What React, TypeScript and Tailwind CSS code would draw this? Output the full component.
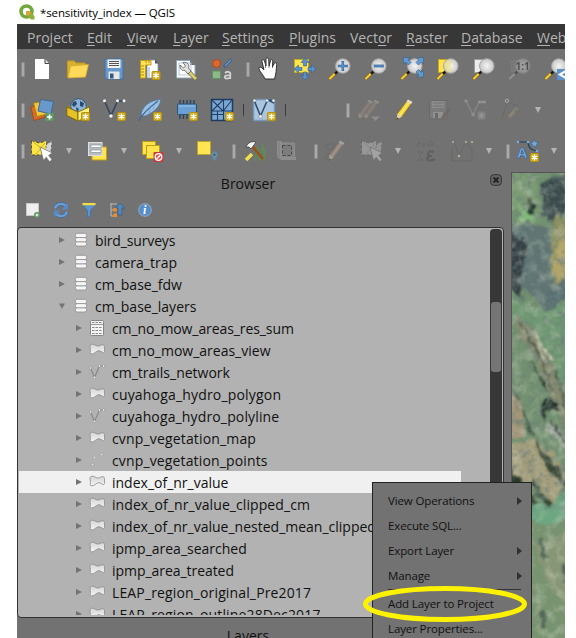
import type { ReactNode } from "react";

const UI = "font-['Open_Sans','Noto_Sans',sans-serif]";

function Icon({ ml = "ml-3", dim = "", children }: { ml?: string; dim?: string; children: ReactNode }) {
  return (
    <svg viewBox="0 0 24 24" className={`h-6 w-6 shrink-0 ${ml} ${dim}`}>
      {children}
    </svg>
  );
}

const Handle = ({ ml }: { ml: string }) => (
  <div className={`h-[15px] w-1 shrink-0 rounded-[1px] border border-[#8a8a8a] bg-[#a9a9a9] ${ml}`} />
);
const Divider = ({ ml }: { ml: string }) => <div className={`h-3 w-px shrink-0 bg-[#3c3c3c] ${ml}`} />;
const Arrow = ({ ml }: { ml: string }) => (
  <svg viewBox="0 0 6 6" className={`h-1.5 w-1.5 shrink-0 ${ml}`}>
    <path d="M0 0H6L3 6Z" fill="#b4b4b4" />
  </svg>
);

/* Small yellow "new" badge in an icon's lower right corner */
const Star = ({ x = 15, y = 14 }: { x?: number; y?: number }) => (
  <g transform={`translate(${x} ${y})`}>
    <rect x=".5" y=".5" width="8" height="8" rx="1" fill="#d3ad22" stroke="#b8930c" />
    <path d="M4.500 1.500V7.500M1.800 3L7.200 6M7.200 3L1.800 6" stroke="#fff" strokeWidth="1.300" />
  </g>
);

const Lens = ({ back }: { back?: ReactNode }) => (
  <>
    {back}
    <path d="M1.500 22L7.500 16" stroke="#8b6a16" strokeWidth="3.200" />
    <path d="M1.500 22L7 16.500" stroke="#f7cf3a" strokeWidth="2" />
    <path d="M7 16.800L9.500 14.300" stroke="#1d1d1d" strokeWidth="2.600" />
    <circle cx="14.800" cy="9" r="7.300" fill="url(#lens)" stroke="#a4a4a4" strokeWidth="1" />
  </>
);

const Pencil = ({ color }: { color: string }) => (
  <>
    <path d="M16 1.500L20.500 4L10 18.500L4.500 22L5.500 15.500Z" fill={color} stroke="#75672c" strokeWidth=".6" />
    <path d="M18 3L7.500 17.500" stroke="#fff" strokeOpacity=".45" strokeWidth="1.200" />
    <path d="M16 1.500L20.500 4L19 6L14.600 3.500Z" fill="#ddd" />
    <path d="M5.500 15.500L10 18.500L4.500 22Z" fill="#ddd1b3" />
    <path d="M5 19.500L7 20.500L4.200 22.300Z" fill="#333" />
  </>
);

const Cursor = () => (
  <path d="M10 8L13.500 21.500L16.200 18.200L19.500 22.700L22 20.800L18.700 16.300L22.500 14Z" fill="#fff" stroke="#666" strokeWidth=".7" />
);

const SelectArt = () => (
  <>
    <path d="M1.500 1.500L9 4L16 2V15.500L1.500 16Z" fill="#fbe447" />
    <path d="M1.500 1.500L9 4L16 2M1.500 1.500V16H9" fill="none" stroke="#5e5520" strokeDasharray="3 2" />
    <path d="M16 6L22 1.500L21 13L18 14L16 12Z" fill="#d5d5d5" stroke="#555" strokeWidth=".8" strokeDasharray="2 2" />
    <path d="M2 2L11 9M15 4L6 15" stroke="#c5b22a" />
    <Cursor />
  </>
);

function FileRow() {
  return (
    <div className="flex h-6 items-center">
      <Handle ml="ml-1" />
      <Icon ml="ml-[5px]">
        <path d="M5 2H15L19 6.500V22H5Z" fill="#fff" />
        <path d="M15 2V6.500H19" fill="#ddd" stroke="#444" strokeWidth="1" />
      </Icon>
      <Icon>
        <path d="M1.500 4H8L10 6H19V20H1.500Z" fill="#d9b02e" stroke="#c49a1d" />
        <path d="M4.500 9L22.500 7.500L19.500 20L2 21Z" fill="#ffd95a" stroke="#d3aa2c" strokeWidth=".8" />
      </Icon>
      <Icon>
        <path d="M3 2H21V22H4.500L3 20.500Z" fill="#6698cb" stroke="#44719f" />
        <rect x="5.500" y="2.500" width="13" height="8.500" fill="#f1f1f1" />
        <path d="M7 4.500H17M7 6.500H17M7 8.500H17" stroke="#555" />
        <rect x="6.500" y="14.500" width="11" height="7.500" fill="#e6e6e6" />
        <rect x="8" y="16.500" width="3.500" height="5" fill="#35597e" />
      </Icon>
      <Icon>
        <path d="M9 3H17L20 6V21H9Z" fill="#fff" stroke="#7c96b8" strokeWidth=".8" />
        <path d="M17 2.500V6.500H21Z" fill="#555" />
        <path d="M2.500 3.500H13V8H7.500V21H2.500Z" fill="#fbe25c" stroke="#c89c09" />
        <path d="M3 9H6M3 12H6M3 15H6M3 18H6M8 4V6M11 4V6" stroke="#b88d06" />
        <path d="M11 10V20" stroke="#94add0" />
        <Star x={13.5} y={14} />
      </Icon>
      <Icon>
        <path d="M2.500 3.500H16L21 8V21H2.500Z" fill="#fff" stroke="#8ea3bd" />
        <path d="M16 3V8H21Z" fill="#666" />
        <rect x="5" y="6" width="12" height="12" fill="none" stroke="#b3c6e2" />
        <path d="M14 14L22 22" stroke="#776a33" strokeWidth="4.500" />
        <path d="M14 14L22 22" stroke="#d7cb74" strokeWidth="3" />
        <path d="M9 5.500C13 4.500 16 8 14.500 11L17 14L14 17L11 13.500C7 14 5.500 11 6 8L9.500 11L11.500 9Z" fill="#dfdfdf" stroke="#555" strokeWidth=".8" />
      </Icon>
      <Icon>
        <circle cx="6.500" cy="6.500" r="4" fill="#d96831" stroke="#af481b" />
        <path d="M14 10L21.500 2.500" stroke="#395f89" strokeWidth="3" />
        <path d="M15 9L21 3" stroke="#6b9acb" strokeWidth="1.200" />
        <rect x="2.500" y="14" width="8" height="7.500" fill="#8bb988" stroke="#5f925f" />
        <path d="M15 16Q18 13.500 20.300 16V22M20 18.300Q14.500 18 14.700 20.300Q15.500 23 20 20.500" fill="none" stroke="#d3d3d3" strokeWidth="1.700" />
      </Icon>
      <Handle ml="ml-3" />
      <Icon ml="ml-1.5">
        <path d="M9 22C7.500 18 4 15 3 12C2.500 10 4.500 9.500 6 11L8 13L6 4.500C5.500 2.500 8 2 8.500 4L10 9V2.500C10 .5 12.500 .5 12.700 2.500L13.200 9L14.500 3.500C15 2 17 2.500 16.800 4L16.400 10L18.300 6.500C19.200 5 21 6 20.700 7.500C20 13 20.500 16 18.500 22Z" fill="#fff" stroke="#222" strokeWidth=".9" />
        <path d="M9.500 5V11M13 5V11M16.500 5V11" stroke="#444" strokeWidth=".7" />
      </Icon>
      <Icon>
        <rect x="2.500" y="2.500" width="14" height="13" fill="#fde650" stroke="#c8a91a" />
        <path d="M13 1L17 5.500H14.500V9H11.500V5.500H9ZM24 12L19.500 16V13.500H16V10.500H19.500V8ZM13 23L9 18.500H11.500V15H14.500V18.500H17ZM2 12L6.500 8V10.500H10V13.500H6.500V16Z" fill="#5a90cb" stroke="#366596" strokeWidth=".6" />
      </Icon>
      <Icon>
        <Lens />
        <path d="M14.800 4V14M9.800 9H19.800" stroke="#3566a0" strokeWidth="2.600" />
        <path d="M14.800 4.500V13.500M10.300 9H19.300" stroke="#6496cb" strokeWidth="1.200" />
      </Icon>
      <Icon>
        <Lens />
        <path d="M9.800 9H19.800" stroke="#3566a0" strokeWidth="2.800" />
        <path d="M10.300 9H19.300" stroke="#6496cb" strokeWidth="1.200" />
      </Icon>
      <Icon>
        <Lens />
        <path d="M3.500 .5H10L8 2.500L11 5.500L8.500 8L5.500 5L3.500 7ZM23.500 .5V7L21.500 5L18.500 8L16 5.500L19 2.500L17 .5ZM23.500 20H17L19 18L16 15L18.500 12.500L21.500 15.500L23.500 13.500Z" fill="#639bd1" stroke="#396590" strokeWidth=".7" />
      </Icon>
      <Icon>
        <Lens back={<rect x="2.500" y="2.500" width="14" height="13" fill="#ffe34c" stroke="#c5a718" />} />
        <path d="M8 7Q11 2 15 3V15Q9 15 8 9" fill="#efe483" opacity=".65" />
      </Icon>
      <Icon>
        <Lens back={<rect x="2.500" y="2.500" width="14" height="13" fill="#ebebeb" stroke="#9b9b9b" />} />
      </Icon>
      <Icon dim="opacity-35 grayscale">
        <Lens back={<rect x="2.500" y="2.500" width="14" height="13" fill="#888" stroke="#777" />} />
        <text x="7.500" y="12.500" fontSize="10" fontWeight="700" fontFamily="Open Sans" fill="#111">1:1</text>
      </Icon>
      <Icon>
        <Lens />
        <rect x="13" y="12" width="11" height="11" fill="#5c91c9" />
        <path d="M22 14L16 17.500L22 21" fill="none" stroke="#fff" strokeWidth="2.200" />
      </Icon>
    </div>
  );
}

function LayerRow() {
  return (
    <div className="flex h-6 items-center">
      <Handle ml="ml-1" />
      <Icon ml="ml-[5px]">
        <path d="M.8 9L12 6L15 19L4 22.500Z" fill="#d86b2c" stroke="#ad4818" />
        <path d="M3.500 5L14 3.500L18 16L7 18.500Z" fill="#f2c540" stroke="#a9800e" />
        <path d="M10.500 1.500L23.500 3.500L21 16L8 13Z" fill="#6899ca" stroke="#406992" />
        <rect x="15.500" y="15" width="8" height="8" rx="1" fill="#5d9d61" />
        <path d="M19.500 16.500V21.500M17 19H22" stroke="#fff" strokeWidth="1.600" />
      </Icon>
      <Icon>
        <path d="M.8 9L12 4L23 9L12 14Z" fill="#a88a13" />
        <circle cx="12.500" cy="8.500" r="7.800" fill="#8db3d8" stroke="#355779" />
        <path d="M7 4L10 3L11 6L8 9L6 7ZM14 3L18 5L17 9L14 8ZM10 9L13 11L11 15Z" fill="#2a4b6d" />
        <path d="M.8 9L12 14V23L.8 17.500Z" fill="#e4c229" stroke="#7e6505" />
        <path d="M12 14L23.500 9V18L12 23Z" fill="#fff27f" stroke="#8d720a" />
        <Star />
      </Icon>
      <Icon>
        <path d="M2.500 3L9 17.500L15.500 3H22" fill="none" stroke="#33475d" strokeWidth="1.600" />
        <g fill="#f3f3f3"><circle cx="2.500" cy="2.800" r="1.500" /><circle cx="9" cy="18" r="1.700" /><circle cx="15.500" cy="2.800" r="1.500" /><circle cx="22" cy="2.800" r="1.500" /></g>
        <Star />
      </Icon>
      <Icon>
        <path d="M3 18C3 9 12 2 22.500 1.500C23 6 18 14 7 18Z" fill="#9cc1e6" stroke="#4c79a6" strokeWidth=".8" />
        <path d="M.5 23C4 16 12 9 20 3" fill="none" stroke="#42698f" strokeWidth="1.300" />
        <path d="M8 11L8.500 14M12 7.500L12.500 11M11 15L12 12M15 11.500L16 8.500" stroke="#6d9bc8" strokeWidth=".8" />
        <Star />
      </Icon>
      <Icon>
        <path d="M6 2V21M9.500 2V21M13 2V21M16.500 2V21M20 2V18" stroke="#253f5c" strokeWidth="1.300" />
        <rect x="3.500" y="6" width="19" height="10.500" rx="1" fill="#6ba0d4" stroke="#2d527a" />
        <path d="M5 8H21" stroke="#9bc3e8" />
        <Star />
      </Icon>
      <Icon>
        <path d="M1.500 1.500H22.500V22.500H1.500Z" fill="#7aa6d4" stroke="#1f3c5f" strokeWidth="1.500" />
        <path d="M13.500 1.500V22.500M1.500 13H22.500M1.500 16.500H13M7.500 13V22M2 2L13 13M13 2L2 13M22 2L14 12" stroke="#203f62" strokeWidth="1.100" />
        <Star />
      </Icon>
      <Divider ml="ml-[9px]" />
      <Icon ml="ml-2">
        <rect x="1.500" y="1.500" width="21" height="21" rx="1" fill="#adc6e0" stroke="#7694b5" strokeWidth="1.500" />
        <path d="M2 2L8.500 18L15.500 2H22M16 2L22 5" fill="none" stroke="#325170" strokeWidth="1.600" />
        <g fill="#fff" stroke="#4c6680" strokeWidth=".5"><circle cx="2.500" cy="2.500" r="1.500" /><circle cx="8.500" cy="18.500" r="1.800" /><circle cx="15" cy="2.500" r="1.500" /><circle cx="21.500" cy="2.500" r="1.500" /></g>
        <Star />
      </Icon>
      <Divider ml="ml-[9px]" />
      <Handle ml="ml-[60px]" />
      <Icon ml="ml-1.5">
        <g opacity=".25"><g transform="translate(-3 0)"><Pencil color="#ad8d80" /></g><g transform="translate(3 0)"><Pencil color="#ad8d80" /></g></g>
        <path d="M15 18.500H24L19.500 23Z" fill="#8d8d8d" />
      </Icon>
      <Icon><Pencil color="#f7d72f" /></Icon>
      <Icon dim="opacity-25">
        <path d="M1.500 2.500H19V21H1.500Z" fill="#999" stroke="#555" />
        <path d="M4 3H16V10H4Z" fill="#ddd" /><path d="M5 5H15M5 8H15" stroke="#777" />
        <rect x="5" y="14" width="10" height="6" fill="#eee" /><rect x="7" y="15" width="3" height="5" fill="#555" />
        <path d="M22 10L14 21" stroke="#795346" strokeWidth="3" />
      </Icon>
      <Icon dim="opacity-25 grayscale">
        <path d="M2 3L9 17L15 4H21" fill="none" stroke="#bbb" strokeWidth="1.500" />
        <path d="M.5 3H3.500M7.500 17H10.500M14 4H22" stroke="#eee" strokeWidth="2.500" /><Star x={13} y={13} />
      </Icon>
      <Icon dim="opacity-40">
        <path d="M2 21L7 4L19 8" fill="none" stroke="#555" strokeWidth=".8" />
        <circle cx="7" cy="2.800" r="1.700" fill="#777" stroke="#fff" />
        <path d="M9 19L17 10" stroke="#aaa08c" strokeWidth="3" /><path d="M15 12L21 19" stroke="#887052" strokeWidth="2" />
        <path d="M2 21L9 14" stroke="#887052" strokeWidth="1.500" />
      </Icon>
      <Arrow ml="ml-[11px]" />
    </div>
  );
}

function SelectRow() {
  return (
    <div className="flex h-6 items-center">
      <Handle ml="ml-1" />
      <Icon ml="ml-[5px]"><SelectArt /></Icon>
      <Arrow ml="ml-3" />
      <Icon ml="ml-[13px]">
        <rect x="7" y="8" width="14.500" height="13" fill="#ffe54c" stroke="#be9e16" />
        <rect x="3.500" y="3.500" width="13.500" height="13" fill="#b7bdc3" stroke="#dce0e3" />
        <rect x="6" y="6" width="10" height="2.500" fill="#fff" stroke="#7c848e" strokeWidth=".6" /><rect x="6" y="11" width="10" height="2.500" fill="#fff" stroke="#7c848e" strokeWidth=".6" />
      </Icon>
      <Arrow ml="ml-3" />
      <Icon ml="ml-[13px]">
        <rect x="2.500" y="2.500" width="13" height="13" fill="#ffe34a" stroke="#bd9e18" />
        <rect x="6.500" y="6.500" width="13" height="13" fill="#ffe34a" stroke="#bd9e18" />
        <rect x="13.500" y="13" width="10" height="10" rx="1" fill="#c93c3c" />
        <circle cx="18.500" cy="18" r="3.300" fill="#e65252" stroke="#fff" strokeWidth="1.300" /><path d="M16.500 20L20.500 16" stroke="#fff" strokeWidth="1.300" />
      </Icon>
      <Arrow ml="ml-3" />
      <Icon ml="ml-[13px]">
        <rect x="2.500" y="2.500" width="13" height="13" fill="#ffe552" stroke="#c2a329" />
        <path d="M19.500 22L16.800 17A3 3 0 1 1 22.200 17Z" fill="#718da0" stroke="#4f8bb0" /><circle cx="19.500" cy="15.700" r="1" fill="#444" />
      </Icon>
      <Handle ml="ml-[13px]" />
      <Icon ml="ml-[7px]">
        <path d="M12 21L15 7L16 22L20 5L21 22L22 10M11 22L14 15M17 21L22 15" fill="none" stroke="#5d8e53" strokeWidth="1.500" opacity=".8" />
        <path d="M9 7L20 20" stroke="#9c5212" strokeWidth="2.500" />
        <path d="M3 8C5 3 9 2 13 3L11 6L8 10L6 8Z" fill="#f1f1f1" stroke="#333" strokeWidth=".7" />
        <path d="M3 21L9 15" stroke="#eee14b" strokeWidth="3.500" />
      </Icon>
      <Icon ml="ml-2" dim="opacity-50">
        <path d="M2.500 2.500H6V4H19.500V19.500H4L2.500 17Z" fill="#999" stroke="#aaa" /><rect x="7.500" y="6.500" width="9" height="10" fill="#888" stroke="#222" strokeDasharray="3 2" />
        <path d="M3 18H21V21H6Z" fill="#aaa" /><path d="M6 3V18" stroke="#bbb" />
      </Icon>
      <Handle ml="ml-[15px]" />
      <Icon ml="ml-1.5">
        <path d="M2 5H10V10H2ZM2 15H9V20H2Z" fill="none" stroke="#6a6a6a" />
        <g opacity=".45"><Pencil color="#bf9b8d" /></g>
      </Icon>
      <Icon dim="opacity-35 grayscale"><SelectArt /></Icon>
      <Arrow ml="ml-[11px]" />
      <Icon ml="ml-[13px]">
        <g fill="none" stroke="#676767" strokeWidth=".9"><path d="M3 8L5 3L10 8V3M13 6L17 2L20 6ZM3 13H9L5 17L9 21H3" /><path d="M20 13Q14 11 14 15Q14 17 18 17Q13 17 13 20Q15 23 21 20" stroke="#606060" strokeWidth="2" /></g>
      </Icon>
      <Icon>
        <path d="M2 9V22H22V9M4 2L9 17L16 2L22 10" fill="none" stroke="#6a6966" /><g fill="#bcb798"><circle cx="3" cy="3" r="1" /><circle cx="9" cy="17" r="1.200" /><circle cx="16" cy="3" r="1" /><circle cx="22" cy="3" r="1" /></g>
      </Icon>
      <Arrow ml="ml-3" />
      <Handle ml="ml-[14px]" />
      <Icon ml="ml-1.5">
        <path d="M2 3H12Q12 11 21 12" fill="none" stroke="#203f61" strokeWidth="1.200" />
        <g fill="#78aadd"><circle cx="2" cy="3" r="1.300" /><circle cx="12" cy="3" r="1.300" /><circle cx="21" cy="12" r="1.300" /></g>
        <path d="M18.500 .5L19.700 3.200L22.600 3.500L20.400 5.400L21 8.200L18.500 6.800L16 8.200L16.600 5.400L14.400 3.500L17.300 3.200Z" fill="#74a9e0" stroke="#345e88" strokeWidth=".5" />
        <text x="1" y="18.500" fontSize="15" fontWeight="700" fontFamily="Open Sans" fill="#7bb0e6" stroke="#34618f" strokeWidth=".7">A</text>
        <Star x={14} y={14} />
      </Icon>
      <Arrow ml="ml-[11px]" />
    </div>
  );
}

type Kind = "db" | "table" | "poly" | "line" | "points";

function TreeIcon({ kind }: { kind: Kind }) {
  return (
    <svg viewBox="0 0 16 16" className="h-4 w-4 shrink-0">
      {kind === "db" && (
        <g fill="#f5f5f5" stroke="#8d8d8d" strokeWidth=".8">
          <rect x="2.300" y="9.700" width="11.400" height="4.300" rx="2" />
          <rect x="2.300" y="5.500" width="11.400" height="4.300" rx="2" />
          <rect x="2.300" y="1.300" width="11.400" height="4.300" rx="2" />
        </g>
      )}
      {kind === "table" && (
        <>
          <rect x="1.500" y=".5" width="13" height="15" rx="1" fill="#f4f4f4" stroke="#858585" />
          <path d="M2 4.500H14" stroke="#999" />
          <path d="M3 2.500H13M3 7.500H13M3 10.500H13M3 13.500H13" stroke="#888" strokeDasharray="2.500 1" />
        </>
      )}
      {kind === "poly" && (
        <path d="M1 5Q.5 2.500 3 2Q5.500 2.500 8 4Q11 4.300 13 2.500Q15.500 2.500 15.500 4.500V9.500Q15 11.500 13 10Q10 7.500 7.500 9.500Q5 12 2 12Q.5 11.500 1.500 8.500Z" fill="url(#poly)" stroke="#8d8d8d" strokeWidth=".8" />
      )}
      {kind === "line" && (
        <>
          <path d="M1.500 4L5.500 13.500L10.500 2H14.500" fill="none" stroke="#888" strokeWidth="1.200" />
          <g fill="#f3f3f3" stroke="#888" strokeWidth=".6"><circle cx="1.500" cy="4" r="1.200" /><circle cx="5.500" cy="13.500" r="1.200" /><circle cx="10.500" cy="2" r="1.200" /><circle cx="14.500" cy="2" r="1.200" /></g>
        </>
      )}
      {kind === "points" && (
        <g fill="#eee" stroke="#8a8a8a" strokeWidth=".6"><circle cx="5.500" cy="5.500" r="1.200" /><circle cx="3.500" cy="12.500" r="1.200" /><circle cx="12.500" cy="2.500" r="1.200" /></g>
      )}
    </svg>
  );
}

const rows: { kind: Kind; name: string; open?: boolean; selected?: boolean; track?: string }[] = [
  { kind: "db", name: "bird_surveys", track: "tracking-[-0.15px]" },
  { kind: "db", name: "camera_trap" },
  { kind: "db", name: "cm_base_fdw" },
  { kind: "db", name: "cm_base_layers", open: true },
  { kind: "table", name: "cm_no_mow_areas_res_sum", track: "tracking-[-0.09px]" },
  { kind: "poly", name: "cm_no_mow_areas_view" },
  { kind: "line", name: "cm_trails_network" },
  { kind: "poly", name: "cuyahoga_hydro_polygon", track: "tracking-[0.18px]" },
  { kind: "line", name: "cuyahoga_hydro_polyline", track: "tracking-[0.14px]" },
  { kind: "poly", name: "cvnp_vegetation_map", track: "tracking-[0.16px]" },
  { kind: "points", name: "cvnp_vegetation_points", track: "tracking-[0.14px]" },
  { kind: "poly", name: "index_of_nr_value", selected: true },
  { kind: "poly", name: "index_of_nr_value_clipped_cm", track: "tracking-[0.08px]" },
  { kind: "poly", name: "index_of_nr_value_nested_mean_clipped" },
  { kind: "poly", name: "ipmp_area_searched" },
  { kind: "poly", name: "ipmp_area_treated", track: "tracking-[-0.05px]" },
  { kind: "poly", name: "LEAP_region_original_Pre2017", track: "tracking-[0.14px]" },
  { kind: "poly", name: "LEAP_region_outline28Dec2017", track: "tracking-[0.14px]" },
];

function Tree() {
  return (
    <div className="flex h-[391px] w-[487px] overflow-hidden rounded-[4px] border border-[#333] bg-[#b2b2b2]">
      <div className="h-[387px] w-[472px] shrink-0 overflow-hidden pt-px pl-px">
        {rows.map((r) => (
          <div key={r.name} className={`flex h-[22px] w-[442px] items-center ${r.selected ? "bg-[#f0f0f0]" : ""} ${r.kind === "db" ? "pl-10" : "pl-[57px]"}`}>
            <svg viewBox="0 0 6 6" className="h-1.5 w-1.5 shrink-0">
              <path d={r.open ? "M0 .5H6L3 6Z" : "M0 0L6 3L0 6Z"} fill="#747474" />
            </svg>
            <div className={r.kind === "db" ? "w-2" : "w-[7px]"} />
            <TreeIcon kind={r.kind} />
            <span className={`pt-0.5 text-[14px] leading-[22px] whitespace-nowrap text-[#111] ${r.kind === "db" ? "ml-1.5" : "ml-[7px]"} ${r.track ?? ""}`}>{r.name}</span>
          </div>
        ))}
      </div>
      <div className="mt-px h-full w-3 shrink-0 rounded-t-[4px] bg-[#373737] px-px pt-[73px]">
        <div className="h-[70px] rounded-[3px] bg-[#757575]" />
      </div>
    </div>
  );
}

function BrowserTools() {
  return (
    <div className="flex h-4 items-center gap-3 pl-2">
      <svg viewBox="0 0 16 16" className="h-4 w-4"><rect x="1.500" y="1.500" width="12" height="12" fill="#efefef" stroke="#c8c8c8" /><circle cx="12" cy="13" r="3" fill="#5d9763" /><path d="M12 11.500V14.500M10.500 13H13.500" stroke="#fff" /></svg>
      <svg viewBox="0 0 16 16" className="h-4 w-4" fill="none"><path d="M2 6.500C3 1.500 9 .5 13 4M14 9.500C13 14.500 7 15.500 3 12" stroke="#3d6999" strokeWidth="3.600" /><path d="M2 6.500C3 1.500 9 .5 13 4M14 9.500C13 14.500 7 15.500 3 12" stroke="#6a9dd3" strokeWidth="2.400" /><path d="M15 1V7.500H8.500ZM1 15V8.500H7.500Z" fill="#568aca" /></svg>
      <svg viewBox="0 0 16 16" className="h-4 w-4"><path d="M2 3H14L9.500 9V15H6.500V9Z" fill="#5f94ce" stroke="#3c6b9e" strokeWidth=".7" /><rect x="1.500" y="1" width="13" height="2.300" fill="#f2df45" /></svg>
      <svg viewBox="0 0 16 16" className="h-4 w-4"><path d="M2 1V14H8M2 8H7M2 2H8" fill="none" stroke="#bbb" /><rect x="4.500" y="6" width="3.500" height="3.500" fill="#f38c20" /><rect x="4.500" y="11.500" width="3.500" height="3.500" fill="#f38c20" /><path d="M11 1L15.500 6H13V13H9V6H6.500Z" fill="#5387bf" stroke="#325b86" strokeWidth=".7" /></svg>
      <svg viewBox="0 0 16 16" className="h-4 w-4"><circle cx="8" cy="8" r="6.300" fill="#568ccb" stroke="#a2bedb" strokeWidth=".7" /><text x="6" y="12" fontFamily="Liberation Serif" fontStyle="italic" fontWeight="700" fontSize="12" fill="#fff">i</text></svg>
    </div>
  );
}

/* Aerial imagery visible on the map canvas */
function MapCanvas() {
  return (
    <svg viewBox="0 0 53 465" preserveAspectRatio="none" className="h-[465px] w-[53px]">
      <defs>
        <filter id="rough" x="-10%" y="-2%" width="120%" height="104%">
          <feTurbulence type="fractalNoise" baseFrequency=".11" numOctaves="3" seed="4" result="n" />
          <feDisplacementMap in="SourceGraphic" in2="n" scale="9" xChannelSelector="R" yChannelSelector="G" />
          <feGaussianBlur stdDeviation="1" />
        </filter>
        <filter id="grain" x="0" y="0" width="100%" height="100%">
          <feTurbulence type="fractalNoise" baseFrequency=".13" numOctaves="3" seed="12" />
          <feColorMatrix values="0 0 0 0 .14  0 0 0 0 .2  0 0 0 0 .18  2.2 0 0 0 -1" />
        </filter>
        <filter id="haze" x="0" y="0" width="100%" height="100%">
          <feTurbulence type="fractalNoise" baseFrequency=".09" numOctaves="3" seed="31" />
          <feColorMatrix values="0 0 0 0 .78  0 0 0 0 .78  0 0 0 0 .66  0 2.2 0 0 -1" />
        </filter>
      </defs>
      <g filter="url(#rough)">
        <rect x="-10" y="-10" width="75" height="490" fill="#72916f" />
        <path d="M-5 0H22L28 48L12 52L-5 30Z" fill="#7b9c75" />
        <path d="M5 30L24 40L22 51L8 46Z" fill="#83b77d" />
        <path d="M14 22L20 24L25 42L15 39Z" fill="#26372e" />
        <path d="M30 8L54 2V38L44 48L30 42Z" fill="#3a4c4e" />
        <path d="M-5 50L36 53L44 90L54 118L34 140L18 120L-5 112Z" fill="#5f7473" />
        <path d="M-5 58L12 66L14 90L6 110L16 135L-5 110Z" fill="#353f44" />
        <path d="M43 42L60 48V105L46 118L38 95Z" fill="#8f9362" />
        <path d="M47 66L58 62V95L45 110L42 95Z" fill="#b3a56a" />
        <path d="M36 118L55 105V125L34 140Z" fill="#596f73" />
        <path d="M-5 112L20 135L35 140L60 126V225L35 215L25 170L-5 150Z" fill="#709873" />
        <path d="M4 142L20 155L38 185L53 220V255L37 218L24 185L5 160Z" fill="#868b70" />
        <path d="M8 150L24 175L42 220M18 187L38 222M43 195L54 240M0 215L13 242L21 264" fill="none" stroke="#2e3e34" strokeWidth="1.800" />
        <path d="M22 160L40 188M24 168L34 190" stroke="#d9d7bd" strokeWidth="1.600" />
        <path d="M-5 215L10 230L14 265H-5Z" fill="#a29679" />
        <path d="M30 228L38 223L47 231L48 240L34 238L32 252L30 250Z" fill="#26342f" />
        <path d="M-5 270L25 268L42 282L54 305L44 335L-5 300Z" fill="#a39e7c" />
        <path d="M32 256L54 275V265L42 247Z" fill="#a4aea0" />
        <path d="M40 247L55 271M22 268L37 294" stroke="#1b281f" strokeWidth="2.200" />
        <path d="M24 268L36 283L47 298L54 306V317L42 303L30 288Z" fill="#3b4939" />
        <path d="M-3 297L8 304L18 320L28 332L40 350L28 343L14 330L8 352L-3 320Z" fill="#25382b" />
        <path d="M18 305L33 320L46 340L34 332L20 318Z" fill="#2e4633" />
        <path d="M8 342L20 330L36 334L54 318V345L38 352L21 347L8 360Z" fill="#6ca781" />
        <path d="M-5 355L20 349L54 355V470H-5Z" fill="#78936f" />
        <path d="M22 373L58 358V430L39 418Z" fill="#879776" />
        <path d="M29 367L33 384M30 440L32 454M52 392L54 408" stroke="#53685a" strokeWidth="5" strokeLinecap="round" />
        <path d="M31 367L35 382" stroke="#93a589" strokeWidth="2" />
      </g>
      <rect width="53" height="340" filter="url(#grain)" opacity=".7" />
      <rect width="53" height="465" filter="url(#haze)" opacity=".35" />
    </svg>
  );
}

const menus = [
  { a: "Pro", u: "j", b: "ect", w: "w-[60px]" },
  { a: "", u: "E", b: "dit", w: "w-[40px]" },
  { a: "", u: "V", b: "iew", w: "w-[46px]" },
  { a: "", u: "L", b: "ayer", w: "w-[49px]" },
  { a: "", u: "S", b: "ettings", w: "w-[67px]" },
  { a: "", u: "P", b: "lugins", w: "w-[61px]" },
  { a: "Vect", u: "o", b: "r", w: "w-[56px]" },
  { a: "", u: "R", b: "aster", w: "w-[55px]" },
  { a: "", u: "D", b: "atabase", w: "w-[76px]" },
  { a: "", u: "W", b: "eb", w: "w-[40px]" },
];

const MenuItem = ({ label, sub }: { label: string; sub?: boolean }) => (
  <div className="flex h-[25px] items-center justify-between pr-[9px] pl-[15px] text-[11.5px] tracking-[-0.12px] whitespace-nowrap text-[#111]">
    {label}
    {sub && <svg viewBox="0 0 5 8" className="h-2 w-[5px]"><path d="M0 0L5 4L0 8Z" fill="#303030" /></svg>}
  </div>
);

export default function App() {
  return (
    <div className={`relative h-[638px] w-[576px] overflow-hidden bg-white ${UI}`}>
      <svg className="absolute h-0 w-0">
        <defs>
          <radialGradient id="lens"><stop offset="0" stopColor="#f5f5f5" /><stop offset="1" stopColor="#c7c7c7" /></radialGradient>
          <linearGradient id="poly" x1="0" y1="0" x2="0" y2="1"><stop stopColor="#d4d4d4" /><stop offset="1" stopColor="#f5f5f5" /></linearGradient>
        </defs>
      </svg>
      <div className="flex h-full w-[565px] flex-col pl-[17px]">
        <div className="flex h-6 shrink-0 items-center pl-0.5">
          <svg viewBox="0 0 16 16" className="h-4 w-4">
            <circle cx="7.500" cy="7.500" r="5.500" fill="none" stroke="#73a83b" strokeWidth="3.600" />
            <path d="M7 7H10.500L15.500 12V15.500H12L7 10.500Z" fill="#93ad3a" />
            <path d="M7 7H10L12 9L9 12L7 10Z" fill="#e4a23a" />
          </svg>
          <span className="ml-[5px] pt-0.5 text-[11.5px] tracking-[-0.12px] whitespace-nowrap text-black">*sensitivity_index — QGIS</span>
        </div>
        <div className="flex h-[25px] shrink-0 items-center overflow-hidden bg-[#373737] pt-0.5 pl-2.5 text-[14px] text-[#b5b5b5]">
          {menus.map((m) => (
            <div key={m.u + m.b} className={`shrink-0 whitespace-nowrap ${m.w}`}>
              {m.a}<span className="underline decoration-1 underline-offset-2">{m.u}</span>{m.b}
            </div>
          ))}
        </div>
        <div className="flex h-[123px] shrink-0 flex-col gap-[17px] overflow-hidden bg-[#727272] pt-2">
          <FileRow />
          <LayerRow />
          <SelectRow />
        </div>
        <div className="flex min-h-0 flex-1 bg-[#727272]">
          <div className="flex w-[494px] shrink-0 flex-col overflow-hidden">
            <div className="flex h-[30px] shrink-0 pt-0.5">
              <div className="w-[462px] text-center text-[14px] leading-[20px] text-[#111]">Browser</div>
              <svg viewBox="0 0 12 12" className="ml-[11px] h-3 w-3"><rect x=".7" y=".7" width="10.600" height="10.600" rx="3" fill="#666" stroke="#333" /><path d="M3.500 3.500L8.500 8.500M8.500 3.500L3.500 8.500" stroke="#222" strokeWidth="1.800" /></svg>
            </div>
            <BrowserTools />
            <div className="mt-[9px] shrink-0"><Tree /></div>
            <div className="mt-2 w-[462px] shrink-0 text-center text-[14px] leading-[20px] text-[#111]">Layers</div>
          </div>
          <div className="flex-1 border-t border-l border-[#555]"><MapCanvas /></div>
        </div>
      </div>
      <div className="absolute top-[482px] left-[372px] h-[160px] w-[160px] border border-[#222] bg-[#727272] pt-[5px]">
        <MenuItem label="View Operations" sub />
        <MenuItem label="Execute SQL..." />
        <MenuItem label="Export Layer" sub />
        <MenuItem label="Manage" sub />
        <div className="mt-px mr-2.5 mb-px ml-[15px] h-px bg-[#333]" />
        <MenuItem label="Add Layer to Project" />
        <MenuItem label="Layer Properties..." />
      </div>
      <svg viewBox="0 0 168 40" className="absolute top-[584px] left-[361px] h-10 w-[168px]">
        <ellipse cx="84" cy="20" rx="79.500" ry="15.500" fill="none" stroke="#fff200" strokeWidth="5" />
      </svg>
    </div>
  );
}
